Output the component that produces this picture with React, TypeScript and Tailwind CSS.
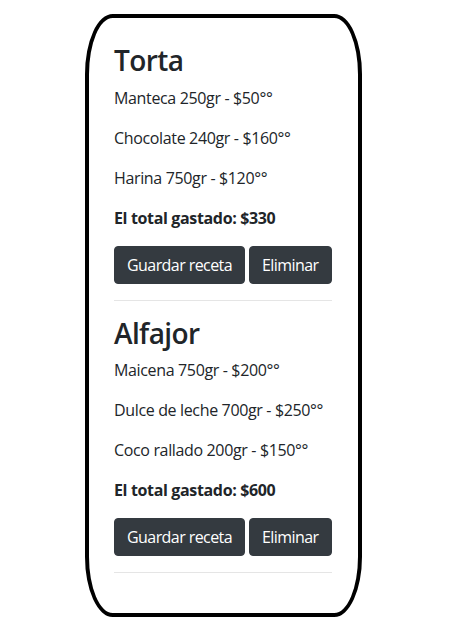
import React from 'react';

interface Receta {
  nombre: string;
  ingredientes: string[];
  total: number;
}

const recetas: Receta[] = [
  {
    nombre: 'Torta',
    ingredientes: ['Manteca 250gr - $50°°', 'Chocolate 240gr - $160°°', 'Harina 750gr - $120°°'],
    total: 330
  },
  {
    nombre: 'Alfajor',
    ingredientes: ['Maicena 750gr - $200°°', 'Dulce de leche 700gr - $250°°', 'Coco rallado 200gr - $150°°'],
    total: 600
  }
];

const RecetaItem: React.FC<{ receta: Receta }> = ({ receta }) => {
  return (
    <div>
      <h3 className="text-[28px] leading-[1.2] font-semibold tracking-[-0.6px] mb-2">{receta.nombre}</h3>
      {receta.ingredientes.map((ing) => (
        <p key={ing} className="text-base leading-6 mb-4 whitespace-nowrap">
          {ing}
        </p>
      ))}
      <p className="text-base leading-6 mb-4 font-bold whitespace-nowrap">El total gastado: ${receta.total}</p>
      <div className="flex gap-1">
        <button className="h-[38px] px-3 rounded bg-[#343a40] text-white text-base tracking-[-0.57px] border border-[#343a40] whitespace-nowrap">
          Guardar receta
        </button>
        <button className="h-[38px] px-3 rounded bg-[#343a40] text-white text-base tracking-[-0.57px] border border-[#343a40] whitespace-nowrap">
          Eliminar
        </button>
      </div>
      <hr className="my-4 border-0 border-t border-[#e5e5e5]" />
    </div>
  );
};

export default function App() {
  return (
    <div
      className="min-h-[631px] bg-white pt-[14px] text-[#212529] tracking-[-0.35px]"
      style={{ fontFamily: '"Open Sans", "Noto Sans", sans-serif' }}
    >
      <div className="ml-[85px] w-[277px] border-4 border-black rounded-[10%] pt-[26px] pb-[24px] pl-[25px] pr-[26px]">
        {recetas.map((r) => (
          <RecetaItem key={r.nombre} receta={r} />
        ))}
      </div>
    </div>
  );
}
